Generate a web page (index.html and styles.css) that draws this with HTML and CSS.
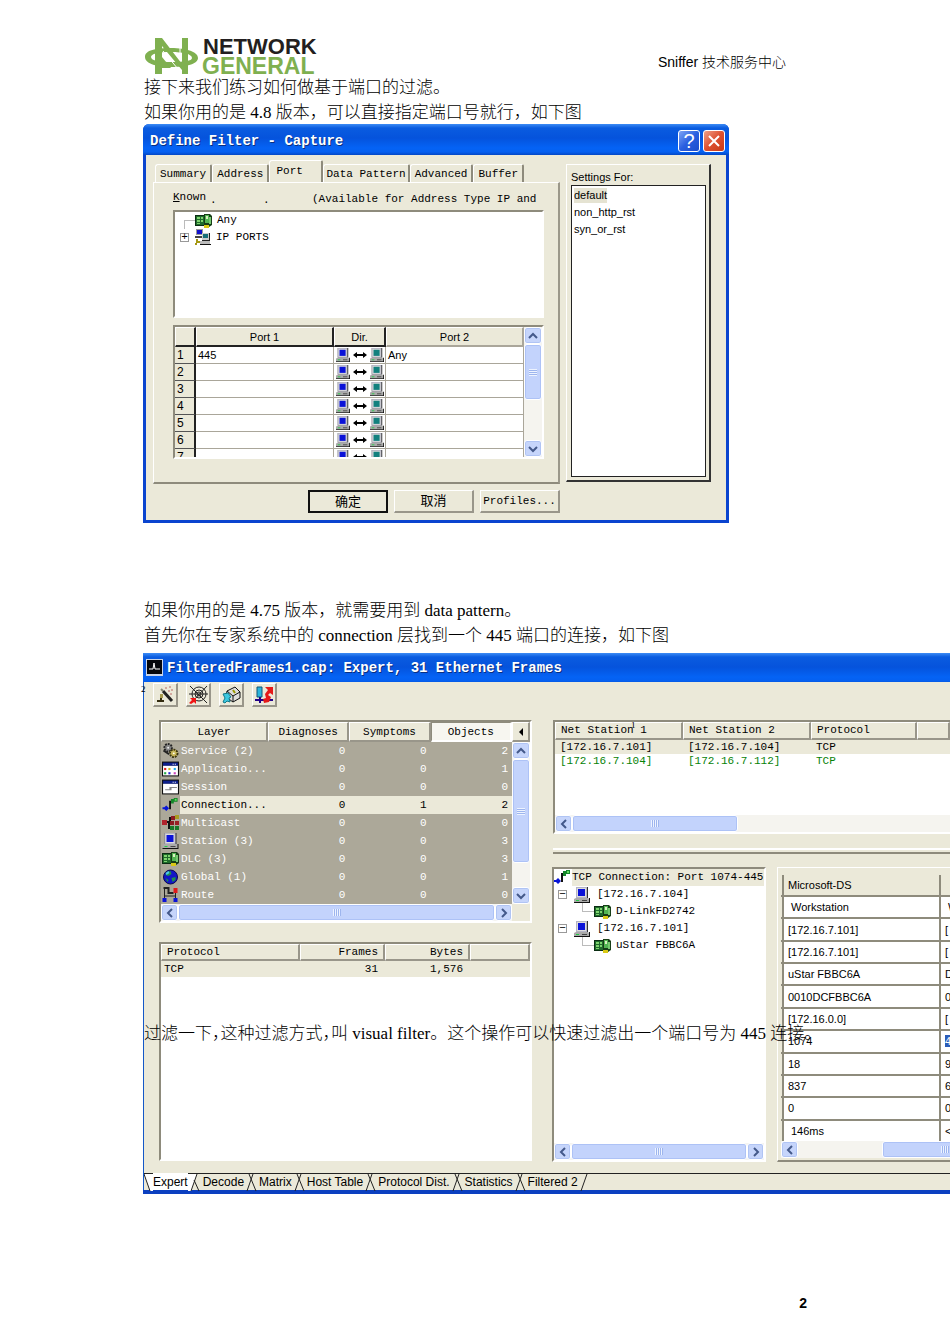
FILE: index.html
```html
<!DOCTYPE html>
<html lang="zh-CN">
<head>
<meta charset="utf-8">
<title>Sniffer 技术服务中心</title>
<link rel="stylesheet" href="styles.css">
</head>
<body>
<svg class="defs" aria-hidden="true">
  <symbol id="pc" viewBox="0 0 16 16">
    <path d="M2 0h12v11H2z" fill="#333"/><path d="M2 0h11v11H2z" fill="#b4b4c4"/>
    <path d="M3 1h9v9H3z" fill="#dcdcdc"/><path class="screen" d="M4 2h7v7H4z"/>
    <path d="M0 12l2-1h12l1 1v3H0z" fill="#aaa"/><path d="M0 15h15v-4h1v5H0z" fill="#111"/>
    <path d="M2 13h3v1H2z" fill="#2c4"/><path d="M8 13h5v1H8z" fill="#444"/>
  </symbol>
  <symbol id="nic" viewBox="0 0 17 16">
    <path d="M0 2h12v11H0z" fill="#0a2d12"/><path d="M1 3h9v9H1z" fill="#1f6b2b"/>
    <path d="M2 4h3v2H2zM2 7h3v2H2zM2 10h3v1H2zM6 4h2v2H6zM6 7h2v2H6z" fill="#7fd46f"/>
    <path d="M9 1h6l2 2v9l-3 2H9z" fill="#173d17"/><path d="M10 2h4v8h-4z" fill="#52b552"/>
    <path d="M11 3h2v3h-2z" fill="#d8f0c0"/><path d="M9 12h5v3H9z" fill="#d9c916"/><path d="M14 4h2v7h-2z" fill="#76c86f"/>
  </symbol>
  <symbol id="ports" viewBox="0 0 17 17">
    <path d="M2 0h7v6H2z" fill="#999"/><path d="M3 1h5v4H3z" fill="#11c"/><path d="M1 7h8v2H1z" fill="#444"/>
    <path d="M8 4h8v8H8z" fill="#222"/><path d="M8 4h7v7H8z" fill="#ccc"/><path d="M9 5h5v4H9z" fill="#176f78"/>
    <path d="M6 12h10v3H6z" fill="#bbb"/><path d="M6 15h11v1H6z" fill="#111"/><path d="M2 10h2v2h2v2H3v2H1v-2h1z" fill="#a59813"/>
  </symbol>
  <symbol id="link" viewBox="0 0 17 17">
    <path d="M0 11h2l2-2 3 3-3 3-2-2H0z" fill="#0714d8"/><path d="M8 13V5h3" fill="none" stroke="#111" stroke-width="2"/>
    <path d="M9 2h3v5H9zM12 1h4v4h-4z" fill="#15862a"/><path d="M13 2h2v2h-2z" fill="#5fe05f"/>
  </symbol>
  <symbol id="gears" viewBox="0 0 17 17">
    <circle cx="6" cy="5" r="4" fill="#888" stroke="#222" stroke-width="2" stroke-dasharray="2 1"/><circle cx="6" cy="5" r="1" fill="#eee"/>
    <circle cx="12" cy="11" r="4" fill="#c8b85a" stroke="#3b3510" stroke-width="2" stroke-dasharray="2 1"/><circle cx="12" cy="11" r="1" fill="#fff"/>
    <path d="M1 8l6 4" stroke="#222" stroke-width="2"/>
  </symbol>
  <symbol id="app" viewBox="0 0 16 14">
    <path d="M0 0h16v14H0z" fill="#111"/><path d="M1 1h14v3H1z" fill="#0d1f8c"/><path d="M1 4h14v9H1z" fill="#fff"/>
    <path d="M10 2h1v1h-1zM12 2h1v1h-1z" fill="#fff"/><path d="M2 6h2v2H2z" fill="#d22"/><path d="M6 6h2v2H6z" fill="#cb2"/><path d="M11 6h2v2h-2z" fill="#2ae"/>
    <path d="M2 10h2v2H2z" fill="#2a4"/><path d="M6 10h2v2H6z" fill="#22c"/><path d="M11 10h2v2h-2z" fill="#c4b"/>
  </symbol>
  <symbol id="session" viewBox="0 0 16 14">
    <path d="M0 0h16v14H0z" fill="#111"/><path d="M1 1h14v3H1z" fill="#0d1f8c"/><path d="M1 4h14v9H1z" fill="#fff"/>
    <path d="M10 2h1v1h-1zM12 2h1v1h-1z" fill="#fff"/><path d="M7 7h7v1H9v2H3V9h4z" fill="#888"/>
  </symbol>
  <symbol id="multi" viewBox="0 0 17 16">
    <path d="M0 5h5v5H0z" fill="#b1232d"/><path d="M5 7h3V3h3M7 8v5h3" fill="none" stroke="#111" stroke-width="2"/>
    <path d="M9 1h4v4H9zM8 6h4v4H8z" fill="#8b1a20"/><path d="M13 0h4v4h-4z" fill="#a89b20"/><path d="M13 6h4v4h-4z" fill="#9a2024"/><path d="M8 11h4v4H8zM13 11h4v4h-4z" fill="#167a28"/>
  </symbol>
  <symbol id="globe" viewBox="0 0 16 16">
    <circle cx="8" cy="8" r="7" fill="#1216c8" stroke="#0a0a50"/><path d="M4 3l4-1 1 3-3 2-3-1zM9 9l4-1v3l-3 2zM3 9l3 2-1 2z" fill="#1d8f4a"/><path d="M3 4l3-2 1 2-3 2z" fill="#4cc7e8"/>
  </symbol>
  <symbol id="route" viewBox="0 0 16 16">
    <path d="M1 1h5v5h5" fill="none" stroke="#222" stroke-width="2"/><path d="M2 2v9M13 5v6M2 9h11" fill="none" stroke="#222"/>
    <path d="M11 1h4v5h-4z" fill="#e01a1a"/><path d="M0 11h4v4H0zM11 11h4v4h-4z" fill="#0b12d8"/>
  </symbol>
  <symbol id="both" viewBox="0 0 14 8"><path d="M0 4l4-3v2h6V1l4 3-4 3V5H4v2z" fill="#000"/></symbol>
  <symbol id="up" viewBox="0 0 10 10"><path d="M1 7l4-4 4 4" fill="none" stroke="#44598a" stroke-width="2"/></symbol>
  <symbol id="down" viewBox="0 0 10 10"><path d="M1 3l4 4 4-4" fill="none" stroke="#44598a" stroke-width="2"/></symbol>
  <symbol id="left" viewBox="0 0 10 10"><path d="M7 1L3 5l4 4" fill="none" stroke="#44598a" stroke-width="2"/></symbol>
  <symbol id="right" viewBox="0 0 10 10"><path d="M3 1l4 4-4 4" fill="none" stroke="#44598a" stroke-width="2"/></symbol>
</svg>

<div class="page">
  <header class="page-header">
    <svg class="logo" width="190" height="40" viewBox="0 0 190 40" role="img" aria-label="Network General">
      <g fill="#7fb050">
        <path d="M12 2h7l20 26V2h6v36h-6V34L19 10v28h-7z"/>
        <path fill-rule="evenodd" d="M28 12c16 0 27 4 27 10s-12 9-26 9S2 28 2 21s11-9 26-9zm0 4c-13 0-20 2-20 5 0 4 9 5 21 5s20-1 20-4c0-4-9-6-21-6z"/>
        <path d="M19 21l9 11H19z"/>
      </g>
      <path d="M20 15l15 18M37 12v9" stroke="#fff" fill="none"/>
      <text class="logo-top" x="60" y="18">NETWORK</text>
      <text class="logo-bottom" x="59" y="38">GENERAL</text>
    </svg>
    <span class="center-name">Sniffer 技术服务中心</span>
  </header>

  <main class="doc">
    <p>接下来我们练习如何做基于端口的过滤。</p>
    <p>如果你用的是 4.8 版本，可以直接指定端口号就行，如下图</p>

    <section class="dialog">
      <div class="titlebar">
        <h2>Define Filter - Capture</h2>
        <button class="cap help" aria-label="Help">?</button>
        <button class="cap close" aria-label="Close"><svg width="14" height="14" viewBox="0 0 14 14"><path d="M2 2l10 10M12 2L2 12" stroke="#fff" stroke-width="2"/></svg></button>
      </div>
      <div class="dialog-body">
        <div class="filter">
          <div class="tabs">
            <button class="tab">Summary</button><button class="tab">Address</button><button class="tab active">Port</button><button class="tab wide">Data Pattern</button><button class="tab">Advanced</button><button class="tab">Buffer</button>
          </div>
          <div class="tab-panel">
            <div class="known"><span><u>K</u>nown</span><i>.</i><i>.</i><span class="avail">(Available for Address Type IP and</span></div>
            <ul class="tree port-tree">
              <li class="any"><svg width="17" height="16"><use href="#nic"/></svg>Any</li>
              <li><span class="box">+</span><svg width="17" height="17"><use href="#ports"/></svg>IP PORTS</li>
            </ul>
            <div class="grid">
              <div class="grid-clip">
                <table class="ports">
                  <colgroup><col class="c-num"><col><col class="c-dir"><col></colgroup>
                  <thead><tr><th></th><th>Port 1</th><th>Dir.</th><th>Port 2</th></tr></thead>
                  <tbody>
                    <tr><th>1</th><td>445</td><td class="dir"><svg class="blue"><use href="#pc"/></svg><svg class="arrow"><use href="#both"/></svg><svg class="teal"><use href="#pc"/></svg></td><td>Any</td></tr>
                    <tr><th>2</th><td></td><td class="dir"><svg class="blue"><use href="#pc"/></svg><svg class="arrow"><use href="#both"/></svg><svg class="teal"><use href="#pc"/></svg></td><td></td></tr>
                    <tr><th>3</th><td></td><td class="dir"><svg class="blue"><use href="#pc"/></svg><svg class="arrow"><use href="#both"/></svg><svg class="teal"><use href="#pc"/></svg></td><td></td></tr>
                    <tr><th>4</th><td></td><td class="dir"><svg class="blue"><use href="#pc"/></svg><svg class="arrow"><use href="#both"/></svg><svg class="teal"><use href="#pc"/></svg></td><td></td></tr>
                    <tr><th>5</th><td></td><td class="dir"><svg class="blue"><use href="#pc"/></svg><svg class="arrow"><use href="#both"/></svg><svg class="teal"><use href="#pc"/></svg></td><td></td></tr>
                    <tr><th>6</th><td></td><td class="dir"><svg class="blue"><use href="#pc"/></svg><svg class="arrow"><use href="#both"/></svg><svg class="teal"><use href="#pc"/></svg></td><td></td></tr>
                    <tr><th>7</th><td></td><td class="dir"><svg class="blue"><use href="#pc"/></svg><svg class="arrow"><use href="#both"/></svg><svg class="teal"><use href="#pc"/></svg></td><td></td></tr>
                  </tbody>
                </table>
              </div>
              <div class="scroll vert">
                <button aria-label="Up"><svg width="10" height="10"><use href="#up"/></svg></button>
                <div class="thumb port-thumb"><span class="grip"></span></div><div class="rest"></div>
                <button aria-label="Down"><svg width="10" height="10"><use href="#down"/></svg></button>
              </div>
            </div>
          </div>
          <div class="actions"><button class="btn default">确定</button><button class="btn">取消</button><button class="btn mono">Profiles...</button></div>
        </div>
        <div class="settings">
          <h3>Settings For:</h3>
          <ul><li><span class="chosen">default</span></li><li>non_http_rst</li><li>syn_or_rst</li></ul>
        </div>
      </div>
    </section>

    <p class="second">如果你用的是 4.75 版本，就需要用到 data pattern。</p>
    <p>首先你在专家系统中的 connection 层找到一个 445 端口的连接，如下图</p>

    <section class="expert">
      <div class="titlebar small">
        <svg width="17" height="17" viewBox="0 0 17 17"><path d="M0 0h17v17H0z" fill="#c8d4e8"/><path d="M1 1h15v14H1z" fill="#05070c"/><path d="M3 10h4l1-6 1 6h5" fill="none" stroke="#fff"/></svg>
        <h2>FilteredFrames1.cap: Expert, 31 Ethernet Frames</h2>
      </div>
      <div class="toolbar">
        <button aria-label="Wizard"><svg width="18" height="18" viewBox="0 0 18 18"><path d="M1 15h7M5 15V8" fill="none" stroke="#332c10" stroke-width="2"/><path d="M4 8h3v4H4z" fill="#a89b50"/><path d="M7 5l9 10" stroke="#222" stroke-width="3"/><path d="M5 3l2 2" stroke="#887" stroke-width="2"/><path d="M9 2h2M13 1h2M12 5h2M15 4h2M14 8h2" stroke="#b66" stroke-width="1"/></svg></button>
        <button aria-label="Target"><svg width="19" height="18" viewBox="0 0 19 18"><g fill="none" stroke="#222"><circle cx="10" cy="8" r="7"/><circle cx="10" cy="8" r="4"/><circle cx="10" cy="8" r="2"/><path d="M1 0l17 17M18 0L3 16M0 8h19"/></g><path d="M0 17l3-3-2-2h6v6l-2-2-3 2z" fill="#f01414"/></svg></button>
        <button aria-label="Export"><svg width="19" height="18" viewBox="0 0 19 18"><path d="M5 5l8-4 5 5v6l-7 4-7-5z" fill="#ddd" stroke="#111"/><path d="M5 5l6 5v6M11 10l7-4" fill="none" stroke="#111"/><path d="M1 8l5-1 3 4-2 1 1 4-3-1-2 2-2-1 2-4z" fill="#3cc8e0" stroke="#178"/><path d="M11 4l2 3" stroke="#990" stroke-width="2"/></svg></button>
        <button aria-label="Route"><svg width="19" height="18" viewBox="0 0 19 18"><path d="M2 1h5v10H2z" fill="#2ab4dc" stroke="#157"/><path d="M0 14h18M5 11v6" stroke="#208" stroke-width="2"/><path d="M10 1h8v8l-3-2-2 2 3 2-2 5-5 1-1-4 3-1-1-4 3-4z" fill="#e41919"/></svg></button>
      </div>
      <div class="panes">
        <div class="left-col">
          <div class="sunken layers">
            <table>
              <colgroup><col class="c-layer"><col><col><col></colgroup>
              <thead><tr><th>Layer</th><th>Diagnoses</th><th>Symptoms</th><th class="pressed">Objects</th></tr></thead>
              <tbody>
                <tr><td><svg><use href="#gears"/></svg><span>Service (2)</span></td><td>0</td><td>0</td><td>2</td></tr>
                <tr><td><svg><use href="#app"/></svg><span>Applicatio...</span></td><td>0</td><td>0</td><td>1</td></tr>
                <tr><td><svg><use href="#session"/></svg><span>Session</span></td><td>0</td><td>0</td><td>0</td></tr>
                <tr class="picked"><td><svg><use href="#link"/></svg><span>Connection...</span></td><td>0</td><td>1</td><td>2</td></tr>
                <tr><td><svg><use href="#multi"/></svg><span>Multicast</span></td><td>0</td><td>0</td><td>0</td></tr>
                <tr><td><svg class="blue"><use href="#pc"/></svg><span>Station (3)</span></td><td>0</td><td>0</td><td>3</td></tr>
                <tr><td><svg><use href="#nic"/></svg><span>DLC (3)</span></td><td>0</td><td>0</td><td>3</td></tr>
                <tr><td><svg><use href="#globe"/></svg><span>Global (1)</span></td><td>0</td><td>0</td><td>1</td></tr>
                <tr><td><svg><use href="#route"/></svg><span>Route</span></td><td>0</td><td>0</td><td>0</td></tr>
              </tbody>
            </table>
            <div class="side">
              <button class="collapse" aria-label="Collapse"><svg width="6" height="8" viewBox="0 0 6 8"><path d="M5 0v8L1 4z"/></svg></button>
              <div class="scroll vert">
                <button aria-label="Up"><svg width="10" height="10"><use href="#up"/></svg></button>
                <div class="thumb layer-thumb"><span class="grip"></span></div><div class="rest"></div>
                <button aria-label="Down"><svg width="10" height="10"><use href="#down"/></svg></button>
              </div>
            </div>
            <div class="scroll horz">
              <button aria-label="Left"><svg width="10" height="10"><use href="#left"/></svg></button>
              <div class="thumb fill"><span class="grip"></span></div>
              <button aria-label="Right"><svg width="10" height="10"><use href="#right"/></svg></button>
            </div>
          </div>
          <div class="sunken protocols">
            <table>
              <colgroup><col class="c-proto"><col class="c-frames"><col class="c-bytes"><col></colgroup>
              <thead><tr><th>Protocol</th><th>Frames</th><th>Bytes</th><th></th></tr></thead>
              <tbody><tr><td>TCP</td><td>31</td><td>1,576</td><td></td></tr></tbody>
            </table>
          </div>
        </div>
        <div class="right-col">
          <div class="sunken stations">
            <table>
              <colgroup><col class="c-st"><col class="c-st"><col class="c-pr"><col></colgroup>
              <thead><tr><th>Net Station 1</th><th>Net Station 2</th><th>Protocol</th><th></th></tr></thead>
              <tbody>
                <tr class="picked"><td>[172.16.7.101]</td><td>[172.16.7.104]</td><td>TCP</td><td></td></tr>
                <tr class="green"><td>[172.16.7.104]</td><td>[172.16.7.112]</td><td>TCP</td><td></td></tr>
              </tbody>
            </table>
            <div class="scroll horz">
              <button aria-label="Left"><svg width="10" height="10"><use href="#left"/></svg></button>
              <div class="thumb st-thumb"><span class="grip"></span></div><div class="rest"></div>
            </div>
            <span class="mark one">1</span>
          </div>
          <div class="splitter"></div>
          <div class="detail-row">
            <div class="sunken conn">
              <ul class="tree">
                <li class="root"><svg width="17" height="17"><use href="#link"/></svg><span>TCP Connection: Port 1074-445</span></li>
                <li class="lvl1"><span class="box">−</span><svg class="blue" width="16" height="16"><use href="#pc"/></svg>[172.16.7.104]</li>
                <li class="lvl2"><svg width="17" height="16"><use href="#nic"/></svg>D-LinkFD2742</li>
                <li class="lvl1"><span class="box">−</span><svg class="blue" width="16" height="16"><use href="#pc"/></svg>[172.16.7.101]</li>
                <li class="lvl2"><svg width="17" height="16"><use href="#nic"/></svg>uStar FBBC6A</li>
              </ul>
              <div class="scroll horz">
                <button aria-label="Left"><svg width="10" height="10"><use href="#left"/></svg></button>
                <div class="thumb fill"><span class="grip"></span></div>
                <button aria-label="Right"><svg width="10" height="10"><use href="#right"/></svg></button>
              </div>
            </div>
            <div class="detail">
              <div class="detail-clip">
                <table>
                  <colgroup><col class="c-stub"><col class="c-val"><col></colgroup>
                  <thead><tr><th></th><th>Microsoft-DS</th><th></th></tr></thead>
                  <tbody>
                    <tr><td></td><td class="in">Workstation</td><td class="in">W</td></tr>
                    <tr><td></td><td>[172.16.7.101]</td><td>[</td></tr>
                    <tr><td></td><td>[172.16.7.101]</td><td>[</td></tr>
                    <tr><td></td><td>uStar FBBC6A</td><td>D</td></tr>
                    <tr><td></td><td>0010DCFBBC6A</td><td>0</td></tr>
                    <tr><td></td><td>[172.16.0.0]</td><td>[</td></tr>
                    <tr><td></td><td>1074</td><td><span class="sel">4</span></td></tr>
                    <tr><td></td><td>18</td><td>9</td></tr>
                    <tr><td></td><td>837</td><td>6</td></tr>
                    <tr><td></td><td>0</td><td>0</td></tr>
                    <tr><td></td><td class="in">146ms</td><td>&lt;</td></tr>
                  </tbody>
                </table>
              </div>
              <div class="scroll horz">
                <button aria-label="Left"><svg width="10" height="10"><use href="#left"/></svg></button>
                <div class="rest gap"></div><div class="thumb dt-thumb"><span class="grip"></span></div>
              </div>
            </div>
          </div>
        </div>
      </div>
      <nav class="sheets">
        <svg width="9" height="17" viewBox="0 0 9 17"><path d="M0 0h9v17H6z" fill="#fff"/><path d="M0 0l6 17" stroke="#222"/></svg>
        <button class="on">Expert</button>
        <svg width="15" height="17" viewBox="0 0 15 17"><path d="M0 0h9L3 17H0z" fill="#fff"/><path d="M3 17L9 0M6 6l5 11" stroke="#222" fill="none"/></svg>
        <button>Decode</button>
        <svg width="15" height="17" viewBox="0 0 15 17"><path d="M3 17L9 0M5 0l7 17" stroke="#222"/></svg>
        <button>Matrix</button>
        <svg width="15" height="17" viewBox="0 0 15 17"><path d="M3 17L9 0M5 0l7 17" stroke="#222"/></svg>
        <button>Host Table</button>
        <svg width="15" height="17" viewBox="0 0 15 17"><path d="M3 17L9 0M5 0l7 17" stroke="#222"/></svg>
        <button>Protocol Dist.</button>
        <svg width="15" height="17" viewBox="0 0 15 17"><path d="M3 17L9 0M5 0l7 17" stroke="#222"/></svg>
        <button>Statistics</button>
        <svg width="15" height="17" viewBox="0 0 15 17"><path d="M3 17L9 0M5 0l7 17" stroke="#222"/></svg>
        <button>Filtered 2</button>
        <svg width="15" height="17" viewBox="0 0 15 17"><path d="M3 17L9 0" stroke="#222"/></svg>
      </nav>
      <span class="mark two">2</span>
      <p class="overlay">过滤一下<span class="half">，</span>这种过滤方式<span class="half">，</span>叫 visual filter。这个操作可以快速过滤出一个端口号为 445 连接。</p>
    </section>
  </main>
  <footer class="page-number">2</footer>
</div>
</body>
</html>
```
FILE: styles.css
```css
* { box-sizing: border-box; }
body { margin: 0; background: #fff; color: #000; font-family: "Liberation Sans", "Noto Sans CJK SC", sans-serif; font-size: 11px; }
p, h2, h3, ul { margin: 0; padding: 0; }
ul { list-style: none; }
button { margin: 0; padding: 0; border: 0; background: none; color: inherit; font: inherit; }
table { border-collapse: separate; border-spacing: 0; table-layout: fixed; width: 100%; }
th, td { padding: 0; font-weight: normal; text-align: left; white-space: nowrap; overflow: hidden; }
svg { flex: none; display: block; }
.defs { position: absolute; width: 0; height: 0; }
.screen { fill: var(--screen, #0a12d8); }
.blue { --screen: #0a12d8; }
.teal { --screen: #12807e; }

.page { min-height: 100vh; overflow: hidden; }
.page-header { display: flex; justify-content: space-between; align-items: center; padding: 36px 164px 0 143px; height: 75px; }
.logo { overflow: visible; }
.logo-top, .logo-bottom { font-family: "Liberation Sans", sans-serif; font-weight: bold; }
.logo-top { font-size: 22px; fill: #231f20; }
.logo-bottom { font-size: 23px; fill: #7fb050; }
.center-name { font-size: 14px; line-height: 20px; margin-top: 12px; font-weight: 300; }
.doc { padding-left: 143px; }
.doc p { font-family: "Liberation Serif", "Noto Sans CJK SC", serif; font-weight: 300; font-size: 17px; line-height: 25px; padding-left: 1px; white-space: nowrap; }
.doc p.second { margin-top: 75px; }

.titlebar { display: flex; align-items: center; gap: 3px; height: 31px; padding: 2px 4px 0 7px; color: #fff; background: linear-gradient(#3d8cf5 0, #0a5ce0 4px, #0553dc 14px, #0563f5 24px, #0560f0 28px, #0347c4 31px); }
.titlebar h2 { flex: 1; font: bold 14px/20px "Liberation Mono", monospace; text-shadow: 1px 1px 0 #0a2f80; white-space: nowrap; }
.titlebar.small { height: 29px; padding: 0 0 0 3px; gap: 4px; }
.cap { display: flex; align-items: center; justify-content: center; width: 22px; height: 22px; border: 1px solid #fff; border-radius: 3px; color: #fff; font-size: 20px; line-height: 20px; }
.cap.help { background: linear-gradient(135deg, #7ea4f5, #2a5fe0 50%, #1c4dcc); }
.cap.close { background: linear-gradient(135deg, #f0a088, #dd5030 50%, #c63a17); }

.dialog { max-width: 586px; margin-top: -1px; border-radius: 6px 6px 0 0; overflow: hidden; background: #0a44cf; }
.dialog-body { display: flex; gap: 6px; margin: 0 3px 3px; padding: 5px 15px 7px 7px; background: #ebe9d9; }
.filter { flex: 1; min-width: 0; }
.tabs { display: flex; align-items: flex-end; height: 22px; padding-left: 2px; font: 11px/16px "Liberation Mono", monospace; }
.tab { height: 18px; padding: 0 4px; border: solid; border-width: 1px 2px 0 1px; border-color: #fff #8e8b7c #fff #fff; border-radius: 3px 2px 0 0; }
.tab.active { height: 22px; width: 54px; padding: 0 6px 2px; text-align: left; }
.tab.wide { padding: 0 2px; }
.tab-panel { min-height: 301px; padding: 7px 14px 23px 19px; border: solid; border-width: 1px 2px 2px 1px; border-color: #fff #9b988a #8e8b7c #fff; }
.known { display: flex; height: 20px; font: 11px/14px "Liberation Mono", monospace; }
.known i { width: 53px; padding-left: 4px; font-style: normal; line-height: 20px; }
.avail { white-space: nowrap; line-height: 18px; }
.tree { font: 11px/17px "Liberation Mono", monospace; white-space: nowrap; }
.tree li { display: flex; align-items: center; height: 17px; gap: 5px; }
.box { display: flex; align-items: center; justify-content: center; width: 9px; height: 9px; border: 1px solid #999; background: #fff; line-height: 9px; }
.port-tree { height: 108px; padding: 0 0 0 5px; border: 2px solid; border-color: #8e8b7c #fff #fff #8e8b7c; background: #fff; }
.port-tree .any { margin-left: 4px; padding-left: 11px; background: linear-gradient(#bbb, #bbb) 0 8px / 11px 1px no-repeat, linear-gradient(#bbb, #bbb) 0 8px / 1px 9px no-repeat; }
.grid { display: flex; height: 134px; margin-top: 7px; border: 2px solid; border-color: #8e8b7c #fff #fff #8e8b7c; background: #ebe9d9; }
.grid-clip { flex: 1; min-width: 0; overflow: hidden; }
.c-num { width: 21px; }
.c-dir { width: 52px; }
.ports th { text-align: center; border: solid; border-width: 1px 2px 2px 1px; border-color: #fff #222 #222 #fff; height: 20px; background: #ebe9d9; }
.ports thead th:last-child { border-color: #fff #aaa69a #aaa69a #fff; }
.ports tbody th { height: 17px; text-align: left; padding-left: 2px; line-height: 14px; border-width: 0 2px 1px 0; border-bottom-color: #555; font-size: 12px; }
.ports td { height: 17px; padding: 0 2px; line-height: 16px; border: solid #aaa69a; border-width: 0 1px 1px 0; background: #fff; }
.ports .dir { line-height: 14px; }
.ports .dir svg { display: inline-block; width: 14px; height: 14px; vertical-align: top; }
.ports .dir svg.arrow { width: 14px; height: 8px; margin: 3px 3px 0; }
.actions { display: flex; justify-content: flex-end; gap: 6px; margin-top: 6px; }
.btn { width: 80px; height: 23px; border: solid; border-width: 1px 2px 2px 1px; border-color: #fff #99968a #99968a #fff; font-size: 13px; line-height: 18px; white-space: nowrap; }
.btn.default { border: 2px solid #111; }
.btn.mono { font: 11px/18px "Liberation Mono", monospace; }
.settings { display: flex; flex-direction: column; width: 145px; height: 318px; margin-top: 4px; padding: 4px 3px 3px 4px; border: solid; border-width: 1px 2px 2px 1px; border-color: #fff #333 #333 #fff; }
.settings h3 { font-weight: normal; font-size: 11px; line-height: 16px; }
.settings ul { flex: 1; border: solid 1px #222; padding: 1px 2px; background: #fff; }
.settings li { line-height: 17px; height: 17px; }
.chosen { display: inline-block; line-height: 15px; background: #e5e3d2; }

.scroll { display: flex; background: #f5f4ef; }
.scroll button { display: flex; align-items: center; justify-content: center; flex: none; width: 17px; height: 17px; border: 1px solid #fff; border-radius: 3px; background: #c6d5fb; box-shadow: inset 0 0 0 1px #b0c4f4; }
.thumb { display: flex; align-items: center; justify-content: center; flex: none; border: 1px solid #fff; border-radius: 3px; background: #c3d3fc; box-shadow: inset 0 0 0 1px #adc2f6; }
.rest { flex: 1; }
.grip { width: 8px; height: 7px; }
.vert { flex-direction: column; width: 18px; }
.vert button { width: 18px; }
.vert .grip { background: repeating-linear-gradient(#edf3ff 0 1px, #9db5ee 1px 2px); }
.horz { height: 17px; }
.horz .grip { background: repeating-linear-gradient(90deg, #edf3ff 0 1px, #9db5ee 1px 2px); }
.port-thumb { height: 56px; }
.layer-thumb { height: 104px; }
.fill { flex: 1; }
.st-thumb { width: 166px; }
.rest.gap { flex: none; width: 84px; }
.dt-thumb { width: 126px; }

.expert { position: relative; margin-top: 5px; padding-left: 1px; background: #1458c8; border-bottom: 4px solid #0b3fc0; white-space: nowrap; font-family: "Liberation Mono", monospace; }
.expert .titlebar { margin-left: -1px; }
.toolbar { display: flex; gap: 8px; padding: 1px 0 0 9px; background: #ebe9d9; }
.toolbar button { display: flex; align-items: center; justify-content: center; width: 25px; height: 24px; border: solid; border-width: 1px 2px 2px 1px; border-color: #fff #99968a #99968a #fff; }
.panes { display: flex; gap: 20px; padding: 13px 0 11px 15px; background: #ebe9d9; }
.left-col { flex: none; width: 373px; display: flex; flex-direction: column; gap: 19px; }
.right-col { flex: 1; min-width: 0; display: flex; flex-direction: column; }
.sunken { border: 2px solid; border-color: #8e8b7c #fff #fff #8e8b7c; background: #fff; }
.expert thead th { border: solid; border-width: 1px 2px 2px 1px; border-color: #fff #99968a #99968a #fff; background: #ebe9d9; }
.layers { display: grid; grid-template-columns: minmax(0, 1fr) 18px; background: #ebe9d9; }
.c-layer { width: 107px; }
.layers thead th { height: 20px; text-align: center; }
.layers thead th.pressed { background: #f7f6f0; border-color: #8e8b7c #fff #fff #8e8b7c; }
.layers tbody td { height: 18px; padding-right: 4px; line-height: 18px; text-align: right; color: #fff; background: #aca899; }
.layers tbody td:first-child { display: flex; align-items: center; gap: 2px; padding: 0 0 0 1px; }
.layers td svg { width: 17px; height: 16px; }
.layers td span { flex: 1; text-align: left; }
.layers .picked td { color: #000; background: #ebe9d9; }
.layers .picked td:first-child { background: linear-gradient(90deg, #aca899 19px, #ebe9d9 19px); }
.side { display: flex; flex-direction: column; }
.side .scroll { flex: 1; }
.collapse { display: flex; align-items: center; justify-content: center; height: 20px; border: solid; border-width: 1px 2px 2px 1px; border-color: #fff #99968a #99968a #fff; }
.protocols { height: 219px; }
.c-proto { width: 139px; }
.c-frames { width: 85px; }
.c-bytes { width: 85px; }
.protocols th { height: 17px; padding: 0 5px; line-height: 14px; text-align: right; }
.protocols td { height: 16px; padding: 0 7px; line-height: 16px; text-align: right; background: #ebe9d9; }
.protocols th:first-child { text-align: left; }
.protocols td:first-child { padding-left: 3px; text-align: left; }
.stations { position: relative; display: flex; flex-direction: column; justify-content: space-between; height: 114px; margin-left: 1px; border-right: 0; }
.c-st { width: 128px; }
.c-pr { width: 106px; }
.stations th { height: 18px; padding-left: 5px; line-height: 15px; }
.stations td { height: 14px; padding-left: 5px; line-height: 14px; }
.stations .picked td { background: #ebe9d9; }
.stations .green { color: #078207; }
.splitter { height: 6px; margin: 14px 0 13px 1px; border-top: 2px solid #fff; border-bottom: 2px solid #8e8b7c; }
.detail-row { display: flex; gap: 11px; height: 295px; }
.conn { flex: none; width: 214px; display: flex; flex-direction: column; justify-content: space-between; }
.tree .root { gap: 1px; }
.root span { flex: 1; background: #ebe9d9; }
.tree .lvl1 { padding-left: 4px; gap: 7px; }
.conn .lvl2 { padding-left: 40px; background: linear-gradient(#bbb, #bbb) 28px 8px / 12px 1px no-repeat, linear-gradient(#bbb, #bbb) 28px 0 / 1px 9px no-repeat; }
.detail { flex: 1; min-width: 0; padding: 7px 0 1px 3px; border: solid; border-width: 1px 0 2px 1px; border-color: #fff #fff #8e8b7c #fff; overflow: hidden; font-family: "Liberation Sans", sans-serif; }
.detail-clip { height: 266px; overflow: hidden; }
.detail table { height: 268px; }
.c-stub { width: 3px; }
.c-val { width: 157px; }
.detail td, .expert .detail th { height: 22px; border: solid #8e8b7c; border-width: 0 2px 2px 0; padding-left: 4px; background: #fff; }
.expert .detail th { background: #ebe9d9; }
.detail td:first-child, .expert .detail th:first-child { padding: 0; background: #ebe9d9; }
.detail td:last-child, .expert .detail th:last-child { border-right: 0; }
.detail td.in { padding-left: 7px; }
.sel { display: inline-block; background: #2b5cb8; color: #fff; }
.sheets { display: flex; height: 17px; border-top: 1px solid #222; background: #ebe9d9; font: 12px/16px "Liberation Sans", sans-serif; }
.sheets .on { margin-top: -1px; padding-top: 1px; background: #fff; }
.mark { position: absolute; font: 9px/10px "Liberation Serif", serif; }
.mark.two { left: -2px; top: 31px; }
.mark.one { left: 76px; top: -2px; }
.doc p.overlay { position: absolute; left: 0; top: 368px; }
.half { font-feature-settings: "halt"; }
.page-number { padding: 100px 143px 30px 0; text-align: right; font-size: 14px; line-height: 18px; font-weight: bold; }
```
